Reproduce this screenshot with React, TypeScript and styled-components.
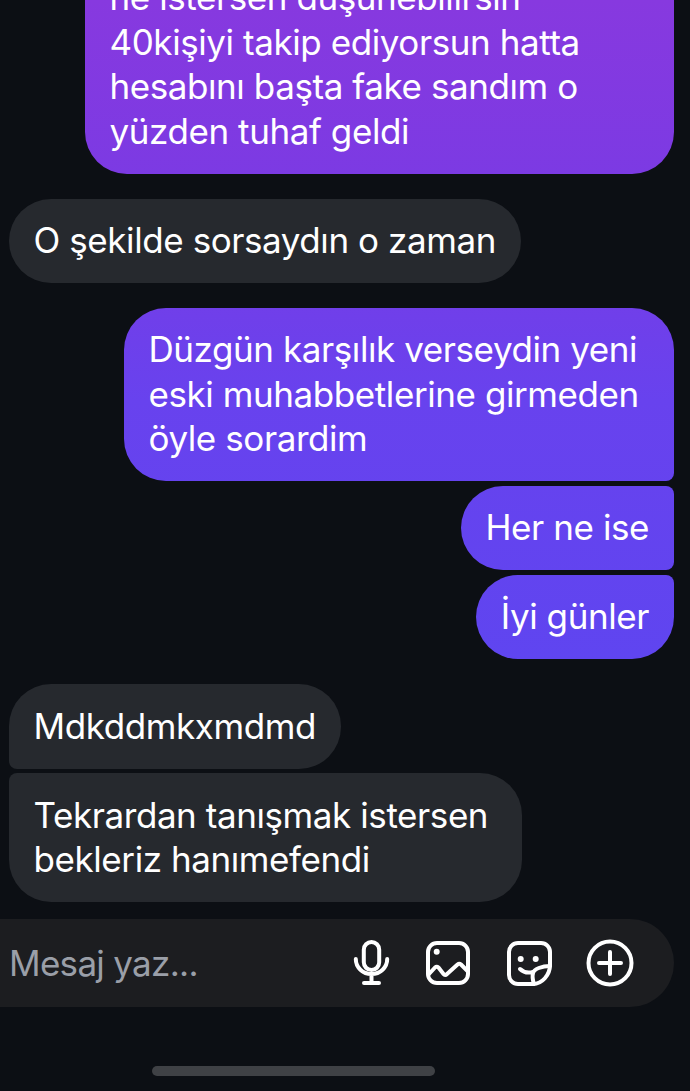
import React from 'react';
import styled, {createGlobalStyle} from 'styled-components';

const GlobalStyle = createGlobalStyle`
  html, body {
    margin: 0;
    padding: 0;
    background: #0c0f14;
  }
`;

const Screen = styled.div`
  position: relative;
  width: 690px;
  height: 1091px;
  overflow: hidden;
  display: flex;
  flex-direction: column;
  justify-content: flex-end;
  gap: 17px;
  padding: 0 16px 84px 9px;
  box-sizing: border-box;
  background: #0c0f14;
  color: #fff;
  font-family: Inter, 'Noto Sans', sans-serif;
  font-size: 35px;
  letter-spacing: -0.42px;
`;

const Thread = styled.div`
  flex-shrink: 0;
  display: flex;
  flex-direction: column;
  gap: 24.7px;
`;

const Group = styled.div<{$mine?: boolean}>`
  display: flex;
  flex-direction: column;
  gap: 4.5px;
  align-items: ${(p) => (p.$mine ? 'flex-end' : 'flex-start')};
`;

const Bubble = styled.div<{$mine?: boolean; $radius?: string; $width?: number}>`
  box-sizing: border-box;
  width: ${(p) => (p.$width ? `${p.$width}px` : 'auto')};
  padding: 19.5px 25px 20.5px 24.5px;
  line-height: 44.5px;
  white-space: nowrap;
  border-radius: ${(p) => p.$radius || '42px'};
  background: ${(p) =>
    p.$mine
      ? 'linear-gradient(180deg, #8739df 0px, #7c3ae3 174px, #6842ee 400px, #5f45f0 660px) fixed'
      : '#26292e'};
`;

const Composer = styled.div`
  flex-shrink: 0;
  display: flex;
  align-items: center;
  height: 88px;
  margin-left: -9px;
  padding: 0 40px 0 9px;
  border-radius: 0 44px 44px 0;
  background: #1c1d20;
`;

const Placeholder = styled.span`
  flex: 1;
  color: #9a9fa8;
  letter-spacing: -0.7px;
`;

const Actions = styled.div`
  display: flex;
  align-items: center;
  gap: 33px;
`;

const Icon = styled.svg<{$narrow?: boolean}>`
  display: block;
  width: ${(p) => (p.$narrow ? '39px' : '48px')};
  height: 48px;
  fill: none;
  stroke: #fff;
  stroke-width: 4;
  stroke-linecap: round;
  stroke-linejoin: round;
`;

const HomeBar = styled.div`
  position: absolute;
  left: 152px;
  bottom: 15px;
  width: 283px;
  height: 10px;
  border-radius: 5px;
  background: #3f4145;
`;

const App = () => {
  return (
    <Screen>
      <GlobalStyle />
      <Thread>
        <Group $mine>
          <Bubble $mine $width={589}>
            ne istersen düşünebilirsin
            <br />
            40kişiyi takip ediyorsun hatta
            <br />
            hesabını başta fake sandım o
            <br />
            yüzden tuhaf geldi
          </Bubble>
        </Group>
        <Group>
          <Bubble>O şekilde sorsaydın o zaman</Bubble>
        </Group>
        <Group $mine>
          <Bubble $mine $width={550} $radius="42px 42px 8px 42px">
            Düzgün karşılık verseydin yeni
            <br />
            eski muhabbetlerine girmeden
            <br />
            öyle sorardim
          </Bubble>
          <Bubble $mine $radius="42px 8px 8px 42px">
            Her ne ise
          </Bubble>
          <Bubble $mine $radius="42px 8px 42px 42px">
            İyi günler
          </Bubble>
        </Group>
        <Group>
          <Bubble $radius="42px 42px 42px 8px">Mdkddmkxmdmd</Bubble>
          <Bubble $width={513} $radius="8px 42px 42px 42px">
            Tekrardan tanışmak istersen
            <br />
            bekleriz hanımefendi
          </Bubble>
        </Group>
      </Thread>
      <Composer>
        <Placeholder>Mesaj yaz...</Placeholder>
        <Actions>
          <Icon $narrow viewBox="0 0 39 48">
            <rect x="11.8" y="3" width="15.4" height="28" rx="7.7" />
            <path d="M3.8 20c0 8.5 7 15 15.7 15s15.7-6.5 15.7-15M19.5 35v9M12 44h15" />
          </Icon>
          <Icon viewBox="0 0 48 48">
            <rect x="4" y="4" width="40" height="40" rx="9" />
            <circle cx="12.7" cy="12.7" r="3" fill="#fff" stroke="none" />
            <path d="M5 35l6-6.500q1.700-1.500 3.500 0l5 6.500q1.500 2 3.500 0l10.500-9.500q1.800-1.500 3.500 0l6.500 6.500" />
          </Icon>
          <Icon viewBox="0 0 48 48">
            <path d="M45 26V13a9 9 0 0 0-9-9H13a9 9 0 0 0-9 9v23a9 9 0 0 0 9 9h15C37 45 45 36 45 26Z" />
            <path d="M45 27C37 27 29 30 28 34C27 38 28 42 29 45" />
            <path d="M15 30C19 34 24 34 28 33" />
            <circle cx="15.700" cy="20" r="3" fill="#fff" stroke="none" />
            <circle cx="30.700" cy="20" r="3" fill="#fff" stroke="none" />
          </Icon>
          <Icon viewBox="0 0 48 48">
            <circle cx="24" cy="24" r="21.5" />
            <path d="M24 13v22M13 24h22" />
          </Icon>
        </Actions>
      </Composer>
      <HomeBar />
    </Screen>
  );
};

export default App;
